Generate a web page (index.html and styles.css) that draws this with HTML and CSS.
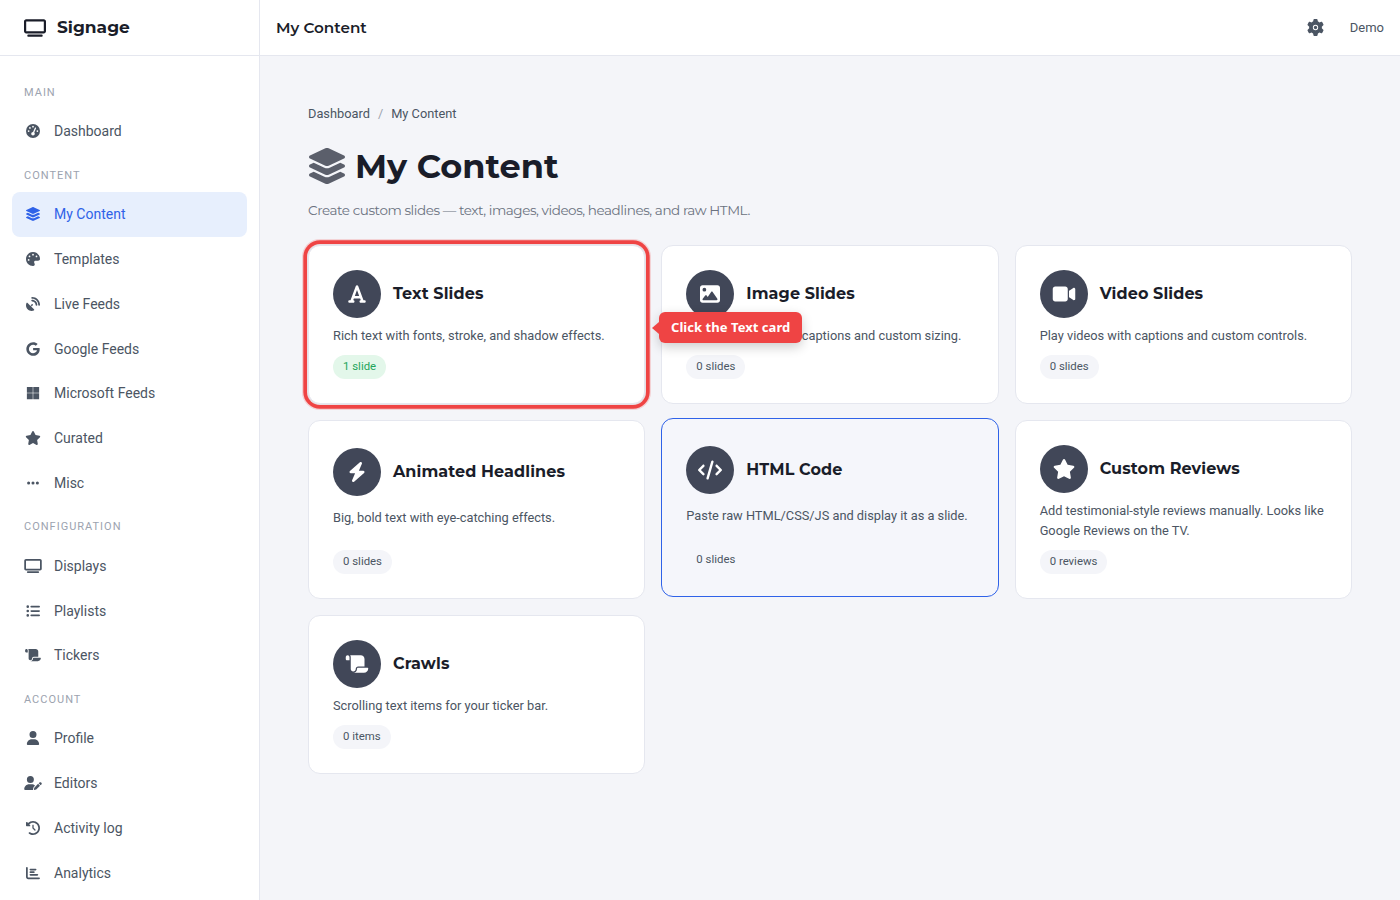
FILE: index.html
```html
<!DOCTYPE html>
<html lang="en">
<head>
<meta charset="utf-8">
<title>My Content</title>
<link rel="stylesheet" href="styles.css">
</head>
<body>
<svg class="sprite" aria-hidden="true">
<symbol id="i-tv" viewBox="0 0 640 512"><path d="M64 64V352H576V64H64zM0 64C0 28.7 28.7 0 64 0H576c35.3 0 64 28.7 64 64V352c0 35.3-28.7 64-64 64H64c-35.3 0-64-28.7-64-64V64zM128 448H512c17.7 0 32 14.3 32 32s-14.3 32-32 32H128c-17.7 0-32-14.3-32-32s14.3-32 32-32z"/></symbol>
<symbol id="i-gauge" viewBox="0 0 512 512"><path d="M0 256a256 256 0 1 1 512 0A256 256 0 1 1 0 256zM288 96a32 32 0 1 0 -64 0 32 32 0 1 0 64 0zM256 416c35.3 0 64-28.7 64-64c0-17.4-6.9-33.1-18.1-44.6L366 161.7c5.3-12.1-.2-26.3-12.3-31.6s-26.3 .2-31.6 12.3L257.9 288c-.6 0-1.3 0-1.9 0c-35.3 0-64 28.7-64 64s28.7 64 64 64zM176 144a32 32 0 1 0 -64 0 32 32 0 1 0 64 0zM96 288a32 32 0 1 0 0-64 32 32 0 1 0 0 64zm352-32a32 32 0 1 0 -64 0 32 32 0 1 0 64 0z"/></symbol>
<symbol id="i-layers" viewBox="32 0 512 512"><path d="M264.5 5.2c14.9-6.9 32.1-6.9 47 0l218.6 101c8.5 3.9 13.9 12.4 13.9 21.8s-5.4 17.9-13.9 21.8l-218.6 101c-14.9 6.9-32.1 6.9-47 0L45.9 149.8C37.4 145.8 32 137.3 32 128s5.4-17.9 13.9-21.8L264.5 5.2zM476.9 209.6l53.2 24.6c8.5 3.9 13.9 12.4 13.9 21.8s-5.4 17.9-13.9 21.8l-218.6 101c-14.9 6.9-32.1 6.9-47 0L45.9 277.8C37.4 273.8 32 265.3 32 256s5.4-17.9 13.9-21.8l53.2-24.6 152 70.2c23.4 10.8 50.4 10.8 73.8 0l152-70.2zm-152 198.2l152-70.2 53.2 24.6c8.5 3.9 13.9 12.4 13.9 21.8s-5.4 17.9-13.9 21.8l-218.6 101c-14.9 6.9-32.1 6.9-47 0L45.9 405.8C37.4 401.8 32 393.3 32 384s5.4-17.9 13.9-21.8l53.2-24.6 152 70.2c23.4 10.8 50.4 10.8 73.8 0z"/></symbol>
<symbol id="i-palette" viewBox="0 0 512 512"><path d="M512 256c0 .9 0 1.8 0 2.7c-.4 36.5-33.6 61.3-70.1 61.3H344c-26.5 0-48 21.5-48 48c0 3.4 .4 6.7 1 9.9c2.1 10.2 6.5 20 10.8 29.9c6.1 13.8 12.1 27.5 12.1 42c0 31.8-21.6 60.7-53.4 62c-3.5 .1-7 .2-10.6 .2C114.6 512 0 397.4 0 256S114.6 0 256 0S512 114.6 512 256zM128 288a32 32 0 1 0 -64 0 32 32 0 1 0 64 0zm0-96a32 32 0 1 0 0-64 32 32 0 1 0 0 64zM288 96a32 32 0 1 0 -64 0 32 32 0 1 0 64 0zm96 96a32 32 0 1 0 0-64 32 32 0 1 0 0 64z"/></symbol>
<symbol id="i-dish" viewBox="0 0 512 512"><path d="M192 32c0-17.7 14.3-32 32-32C383.1 0 512 128.9 512 288c0 17.7-14.3 32-32 32s-32-14.3-32-32C448 164.3 347.7 64 224 64c-17.7 0-32-14.3-32-32zM60.6 220.6L164.7 324.7l28.4-28.4c-.7-2.6-1.1-5.4-1.1-8.3c0-17.7 14.3-32 32-32s32 14.3 32 32s-14.3 32-32 32c-2.9 0-5.6-.4-8.3-1.1l-28.4 28.4L291.4 451.4c14.5 14.5 11.8 38.8-7.3 46.3C260.5 506.9 234.9 512 208 512C93.1 512 0 418.9 0 304c0-26.9 5.1-52.5 14.4-76.1c7.5-19 31.8-21.8 46.3-7.3zM224 96c106 0 192 86 192 192c0 17.7-14.3 32-32 32s-32-14.3-32-32c0-70.7-57.3-128-128-128c-17.7 0-32-14.3-32-32s14.3-32 32-32z"/></symbol>
<symbol id="i-google" viewBox="0 0 488 512"><path d="M488 261.8C488 403.3 391.1 504 248 504 110.8 504 0 393.2 0 256S110.8 8 248 8c66.8 0 123 24.5 166.3 64.9l-67.5 64.9C258.5 52.6 94.3 116.6 94.3 256c0 86.5 69.1 156.6 153.7 156.6 98.2 0 135-70.4 140.8-106.9H248v-85.3h236.1c2.3 12.7 3.9 24.9 3.9 41.4z"/></symbol>
<symbol id="i-ms" viewBox="0 0 448 512"><path d="M0 32h214.6v214.6H0V32zm233.4 0H448v214.6H233.4V32zM0 265.4h214.6V480H0V265.4zm233.4 0H448V480H233.4V265.4z"/></symbol>
<symbol id="i-star" viewBox="0 0 576 512"><path d="M316.9 18C311.6 7 300.4 0 288.1 0s-23.4 7-28.8 18L195 150.3 51.4 171.5c-12 1.8-22 10.2-25.7 21.7s-.7 24.2 7.9 32.7L137.8 329 113.2 474.7c-2 12 3 24.2 12.9 31.3s23 8 33.8 2.3l128.3-68.5 128.3 68.5c10.8 5.7 23.9 4.9 33.8-2.3s14.9-19.3 12.9-31.3L438.5 329 542.7 225.9c8.6-8.5 11.7-21.2 7.9-32.7s-13.7-19.9-25.7-21.7L381.2 150.3 316.9 18z"/></symbol>
<symbol id="i-dots" viewBox="0 0 448 512"><path d="M8 256a56 56 0 1 1 112 0A56 56 0 1 1 8 256zm160 0a56 56 0 1 1 112 0A56 56 0 1 1 168 256zm216-56a56 56 0 1 1 0 112 56 56 0 1 1 0-112z"/></symbol>
<symbol id="i-list" viewBox="0 0 512 512"><path d="M64 144a48 48 0 1 0 0-96 48 48 0 1 0 0 96zM192 64c-17.7 0-32 14.3-32 32s14.3 32 32 32H480c17.7 0 32-14.3 32-32s-14.3-32-32-32H192zm0 160c-17.7 0-32 14.3-32 32s14.3 32 32 32H480c17.7 0 32-14.3 32-32s-14.3-32-32-32H192zm0 160c-17.7 0-32 14.3-32 32s14.3 32 32 32H480c17.7 0 32-14.3 32-32s-14.3-32-32-32H192zM64 464a48 48 0 1 0 0-96 48 48 0 1 0 0 96zm48-208a48 48 0 1 0 -96 0 48 48 0 1 0 96 0z"/></symbol>
<symbol id="i-scroll" viewBox="0 0 576 512"><path d="M0 80v48c0 17.7 14.3 32 32 32H48 96V80c0-26.5-21.5-48-48-48S0 53.5 0 80zM112 32c10 13.4 16 30 16 48V384c0 35.3 28.7 64 64 64s64-28.7 64-64v-5.3c0-32.4 26.3-58.7 58.7-58.7H480V128c0-53-43-96-96-96H112zM464 480c61.9 0 112-50.1 112-112c0-8.8-7.2-16-16-16H314.7c-14.7 0-26.7 11.9-26.7 26.7V384c0 53-43 96-96 96H368h96z"/></symbol>
<symbol id="i-user" viewBox="0 0 448 512"><path d="M224 256A128 128 0 1 0 224 0a128 128 0 1 0 0 256zm-45.7 48C79.8 304 0 383.8 0 482.3C0 498.7 13.3 512 29.7 512H418.3c16.4 0 29.7-13.3 29.7-29.7C448 383.8 368.2 304 269.7 304H178.3z"/></symbol>
<symbol id="i-userpen" viewBox="0 0 640 512"><path d="M224 256A128 128 0 1 0 224 0a128 128 0 1 0 0 256zm-45.7 48C79.8 304 0 383.8 0 482.3C0 498.7 13.3 512 29.7 512H322.8c-3.1-8.8-3.7-18.4-1.4-27.8l15-60.1c2.8-11.3 8.6-21.5 16.8-29.7l40.3-40.3c-32.1-31-75.7-50.1-123.9-50.1H178.3zm435.5-68.3c-15.6-15.6-40.9-15.6-56.6 0l-29.4 29.4 71 71 29.4-29.4c15.6-15.6 15.6-40.9 0-56.6l-14.4-14.4zM375.9 417c-4.1 4.1-7 9.2-8.4 14.9l-15 60.1c-1.4 5.5 .2 11.2 4.2 15.2s9.7 5.6 15.2 4.2l60.1-15c5.6-1.4 10.8-4.3 14.9-8.4L576.1 358.7l-71-71L375.9 417z"/></symbol>
<symbol id="i-history" viewBox="0 0 512 512"><path d="M75 75L41 41C25.9 25.9 0 36.6 0 57.9V168c0 13.3 10.7 24 24 24H134.1c21.4 0 32.1-25.9 17-41l-30.8-30.8C155 85.5 203 64 256 64c106 0 192 86 192 192s-86 192-192 192c-40.8 0-78.6-12.7-109.7-34.4c-14.5-10.1-34.4-6.6-44.6 7.9s-6.6 34.4 7.9 44.6C151.2 495 201.7 512 256 512c141.4 0 256-114.6 256-256S397.4 0 256 0C185.3 0 121.3 28.7 75 75zm181 53c-13.3 0-24 10.7-24 24V256c0 6.4 2.5 12.5 7 17l72 72c9.4 9.4 24.6 9.4 33.9 0s9.4-24.6 0-33.9l-65-65V152c0-13.3-10.7-24-24-24z"/></symbol>
<symbol id="i-chart" viewBox="0 0 512 512"><path d="M32 32c17.7 0 32 14.3 32 32V400c0 8.8 7.2 16 16 16H480c17.7 0 32 14.3 32 32s-14.3 32-32 32H80c-44.2 0-80-35.8-80-80V64C0 46.3 14.3 32 32 32zm96 96c0-17.7 14.3-32 32-32l192 0c17.7 0 32 14.3 32 32s-14.3 32-32 32l-192 0c-17.7 0-32-14.3-32-32zm32 64H288c17.7 0 32 14.3 32 32s-14.3 32-32 32H160c-17.7 0-32-14.3-32-32s14.3-32 32-32zm0 96H416c17.7 0 32 14.3 32 32s-14.3 32-32 32H160c-17.7 0-32-14.3-32-32s14.3-32 32-32z"/></symbol>
<symbol id="i-gear" viewBox="0 0 512 512"><path d="M495.9 166.6c3.2 8.7 .5 18.4-6.4 24.6l-43.3 39.4c1.1 8.3 1.7 16.8 1.7 25.4s-.6 17.1-1.7 25.4l43.3 39.4c6.9 6.2 9.6 15.9 6.4 24.6c-4.4 11.9-9.7 23.3-15.8 34.3l-4.7 8.1c-6.6 11-14 21.4-22.1 31.2c-5.9 7.2-15.7 9.6-24.5 6.8l-55.7-17.7c-13.4 10.3-28.2 18.9-44 25.4l-12.5 57.1c-2 9.1-9 16.3-18.2 17.8c-13.8 2.3-28 3.5-42.5 3.5s-28.7-1.2-42.5-3.5c-9.2-1.5-16.2-8.7-18.2-17.8l-12.5-57.1c-15.8-6.5-30.6-15.1-44-25.4L83.1 425.9c-8.8 2.8-18.6 .3-24.5-6.8c-8.1-9.8-15.5-20.2-22.1-31.2l-4.7-8.1c-6.1-11-11.4-22.4-15.8-34.3c-3.2-8.7-.5-18.4 6.4-24.6l43.3-39.4C64.6 273.1 64 264.6 64 256s.6-17.1 1.7-25.4L22.4 191.2c-6.9-6.2-9.6-15.9-6.4-24.6c4.4-11.9 9.7-23.3 15.8-34.3l4.7-8.1c6.6-11 14-21.4 22.1-31.2c5.9-7.2 15.7-9.6 24.5-6.8l55.7 17.7c13.4-10.3 28.2-18.9 44-25.4l12.5-57.1c2-9.1 9-16.3 18.2-17.8C227.3 1.2 241.5 0 256 0s28.7 1.2 42.5 3.5c9.2 1.5 16.2 8.7 18.2 17.8l12.5 57.1c15.8 6.5 30.6 15.1 44 25.4l55.7-17.7c8.8-2.8 18.6-.3 24.5 6.8c8.1 9.8 15.5 20.2 22.1 31.2l4.7 8.1c6.1 11 11.4 22.4 15.8 34.3zM256 336a80 80 0 1 0 0-160 80 80 0 1 0 0 160z"/><circle cx="256" cy="256" r="50"/></symbol>
<symbol id="i-font" viewBox="0 0 448 512"><path d="M254 52.8C249.3 40.3 237.3 32 224 32s-25.3 8.3-30 20.8L57.8 416H32c-17.7 0-32 14.3-32 32s14.3 32 32 32h96c17.7 0 32-14.3 32-32s-14.3-32-32-32h-1.8l18-48H303.8l18 48H320c-17.7 0-32 14.3-32 32s14.3 32 32 32h96c17.7 0 32-14.3 32-32s-14.3-32-32-32H390.2L254 52.8zM279.8 304H168.2L224 155.1 279.8 304z"/></symbol>
<symbol id="i-image" viewBox="0 0 512 512"><path d="M0 96C0 60.7 28.7 32 64 32H448c35.3 0 64 28.7 64 64V416c0 35.3-28.7 64-64 64H64c-35.3 0-64-28.7-64-64V96zM323.8 202.5c-4.5-6.6-11.9-10.5-19.8-10.5s-15.4 3.9-19.8 10.5l-87 127.6L170.7 297c-4.6-5.7-11.5-9-18.7-9s-14.2 3.3-18.7 9l-64 80c-5.8 7.2-6.9 17.1-2.9 25.4s12.4 13.6 21.6 13.6h96 32H424c8.9 0 17.1-4.9 21.2-12.8s3.6-17.4-1.4-24.7l-120-176zM112 192a48 48 0 1 0 0-96 48 48 0 1 0 0 96z"/></symbol>
<symbol id="i-video" viewBox="0 0 576 512"><path d="M0 128C0 92.7 28.7 64 64 64H320c35.3 0 64 28.7 64 64V384c0 35.3-28.7 64-64 64H64c-35.3 0-64-28.7-64-64V128zM559.1 99.8c10.4 5.6 16.9 16.4 16.9 28.2V384c0 11.8-6.5 22.6-16.9 28.2s-23 5-32.9-1.6l-96-64L416 337.1V320 192 174.9l14.2-9.5 96-64c9.8-6.5 22.4-7.2 32.9-1.6z"/></symbol>
<symbol id="i-bolt" viewBox="0 0 448 512"><path d="M349.4 44.6c5.9-13.7 1.5-29.7-10.6-38.5s-28.6-8-39.9 1.8l-256 224c-10 8.8-13.6 22.9-8.9 35.3S50.7 288 64 288H175.5L98.6 467.4c-5.9 13.7-1.5 29.7 10.6 38.5s28.6 8 39.9-1.8l256-224c10-8.8 13.6-22.9 8.9-35.3s-16.6-20.7-30-20.7H272.5L349.4 44.6z"/></symbol>
<symbol id="i-code" viewBox="0 0 640 512"><path d="M392.8 1.2c-17-4.9-34.7 5-39.6 22l-128 448c-4.9 17 5 34.7 22 39.6s34.7-5 39.6-22l128-448c4.9-17-5-34.7-22-39.6zm80.6 120.1c-12.5 12.5-12.5 32.8 0 45.3L562.7 256l-89.4 89.4c-12.5 12.5-12.5 32.8 0 45.3s32.8 12.5 45.3 0l112-112c12.5-12.5 12.5-32.8 0-45.3l-112-112c-12.5-12.5-32.8-12.5-45.3 0zm-306.7 0c-12.5-12.5-32.8-12.5-45.3 0l-112 112c-12.5 12.5-12.5 32.8 0 45.3l112 112c12.5 12.5 32.8 12.5 45.3 0s12.5-32.8 0-45.3L77.3 256l89.4-89.4c12.5-12.5 12.5-32.8 0-45.3z"/></symbol>
</svg>

<div class="app">
  <aside class="sidebar">
    <div class="brand"><svg class="brand-icon"><use href="#i-tv"/></svg><span class="brand-name">Signage</span></div>
    <nav class="nav">
      <div class="nav-label">MAIN</div>
      <a class="nav-item"><span class="nav-icon"><svg><use href="#i-gauge"/></svg></span>Dashboard</a>
      <div class="nav-label">CONTENT</div>
      <a class="nav-item active"><span class="nav-icon"><svg><use href="#i-layers"/></svg></span>My Content</a>
      <a class="nav-item"><span class="nav-icon"><svg><use href="#i-palette"/></svg></span>Templates</a>
      <a class="nav-item"><span class="nav-icon"><svg><use href="#i-dish"/></svg></span>Live Feeds</a>
      <a class="nav-item"><span class="nav-icon"><svg><use href="#i-google"/></svg></span>Google Feeds</a>
      <a class="nav-item"><span class="nav-icon"><svg><use href="#i-ms"/></svg></span>Microsoft Feeds</a>
      <a class="nav-item"><span class="nav-icon"><svg><use href="#i-star"/></svg></span>Curated</a>
      <a class="nav-item"><span class="nav-icon"><svg><use href="#i-dots"/></svg></span>Misc</a>
      <div class="nav-label">CONFIGURATION</div>
      <a class="nav-item"><span class="nav-icon"><svg><use href="#i-tv"/></svg></span>Displays</a>
      <a class="nav-item"><span class="nav-icon"><svg><use href="#i-list"/></svg></span>Playlists</a>
      <a class="nav-item"><span class="nav-icon"><svg><use href="#i-scroll"/></svg></span>Tickers</a>
      <div class="nav-label">ACCOUNT</div>
      <a class="nav-item"><span class="nav-icon"><svg><use href="#i-user"/></svg></span>Profile</a>
      <a class="nav-item"><span class="nav-icon"><svg><use href="#i-userpen"/></svg></span>Editors</a>
      <a class="nav-item"><span class="nav-icon"><svg><use href="#i-history"/></svg></span>Activity log</a>
      <a class="nav-item"><span class="nav-icon"><svg><use href="#i-chart"/></svg></span>Analytics</a>
    </nav>
  </aside>
  <div class="body">
    <header class="topbar">
      <div class="topbar-title">My Content</div>
      <div class="topbar-right"><svg class="gear"><use href="#i-gear"/></svg><span class="user">Demo</span></div>
    </header>
    <main class="main">
      <div class="crumbs"><span>Dashboard</span><span class="sep">/</span><span>My Content</span></div>
      <h1 class="title"><svg class="title-icon"><use href="#i-layers"/></svg>My Content</h1>
      <p class="sub">Create custom slides — text, images, videos, headlines, and raw HTML.</p>
      <div class="grid">
        <section class="card highlighted">
          <div class="card-head"><span class="circle"><svg><use href="#i-font"/></svg></span><h2>Text Slides</h2></div>
          <p class="desc">Rich text with fonts, stroke, and shadow effects.</p>
          <div class="badge-row"><span class="badge green">1 slide</span></div>
          <div class="tip">Click the Text card</div>
        </section>
        <section class="card">
          <div class="card-head"><span class="circle"><svg><use href="#i-image"/></svg></span><h2>Image Slides</h2></div>
          <p class="desc">Upload images with captions and custom sizing.</p>
          <div class="badge-row"><span class="badge">0 slides</span></div>
        </section>
        <section class="card">
          <div class="card-head"><span class="circle"><svg><use href="#i-video"/></svg></span><h2>Video Slides</h2></div>
          <p class="desc">Play videos with captions and custom controls.</p>
          <div class="badge-row"><span class="badge">0 slides</span></div>
        </section>
        <section class="card">
          <div class="card-head"><span class="circle"><svg><use href="#i-bolt"/></svg></span><h2>Animated Headlines</h2></div>
          <p class="desc">Big, bold text with eye-catching effects.</p>
          <div class="badge-row"><span class="badge">0 slides</span></div>
        </section>
        <section class="card hovered">
          <div class="card-head"><span class="circle"><svg><use href="#i-code"/></svg></span><h2>HTML Code</h2></div>
          <p class="desc">Paste raw HTML/CSS/JS and display it as a slide.</p>
          <div class="badge-row"><span class="badge">0 slides</span></div>
        </section>
        <section class="card">
          <div class="card-head"><span class="circle"><svg><use href="#i-star"/></svg></span><h2>Custom Reviews</h2></div>
          <p class="desc">Add testimonial-style reviews manually. Looks like Google Reviews on the TV.</p>
          <div class="badge-row"><span class="badge">0 reviews</span></div>
        </section>
        <section class="card">
          <div class="card-head"><span class="circle"><svg><use href="#i-scroll"/></svg></span><h2>Crawls</h2></div>
          <p class="desc">Scrolling text items for your ticker bar.</p>
          <div class="badge-row"><span class="badge">0 items</span></div>
        </section>
      </div>
    </main>
  </div>
</div>
</body>
</html>
```

FILE: styles.css
```css
* { box-sizing: border-box; }
html, body { margin: 0; height: 100%; overflow: hidden; }
body { font-family: Roboto, "Liberation Sans", sans-serif; color: #4b5563; background: #f4f5f9; }
.sprite { display: none; }
svg { fill: currentColor; display: block; }

.app { display: flex; height: 900px; }
.sidebar { width: 260px; flex: none; background: #fff; border-right: 1px solid #e5e7ef; }
.brand { height: 56px; display: flex; align-items: center; gap: 11px; padding-left: 24px; border-bottom: 1px solid #e5e7ef; font-family: Montserrat, Inter, sans-serif; font-weight: 700; font-size: 17px; color: #1a1d29; }
.brand-icon { width: 22px; height: 18px; }
.brand-name { margin-bottom: 2px; }
.nav { padding: 14.8px 12px 0; }
.nav-label { padding: 14px 12px 7.6px; font-size: 11px; line-height: 16.5px; letter-spacing: 1px; color: #9ca3af; }
.nav-item { display: flex; align-items: center; gap: 12px; height: 44.8px; padding: 0 12px; border-radius: 8px; font-size: 14px; color: #4b5563; }
.nav-icon { width: 18px; height: 14px; display: flex; justify-content: center; }
.nav-icon svg { height: 14px; width: 18px; }
.nav-item.active { background: #e7effd; color: #2f62e8; }

.body { flex: 1; min-width: 0; display: flex; flex-direction: column; }
.topbar { height: 56px; flex: none; display: flex; align-items: center; justify-content: space-between; padding: 0 16px; background: #fff; border-bottom: 1px solid #e5e7ef; }
.topbar-title { font-family: Montserrat, Inter, sans-serif; font-weight: 600; font-size: 15.2px; color: #1a1d29; }
.topbar-right { display: flex; align-items: center; gap: 26px; }
.gear { width: 17px; height: 17px; color: #4b5563; }
.user { font-size: 13px; color: #4b5563; }

.main { padding: 48px; flex: 1; }
.crumbs { display: flex; gap: 8px; font-size: 12.8px; line-height: 20px; color: #4b5563; }
.sep { color: #9ca3af; }
.title { display: flex; align-items: center; gap: 10px; margin: 20px 0 0; font-family: Montserrat, Inter, sans-serif; font-weight: 700; font-size: 33.6px; line-height: 44px; color: #1a1d29; }
.title-icon { width: 36px; height: 36px; margin-left: 1px; color: #5b5f6b; }
.sub { margin: 12px 0 0; font-family: Montserrat, Inter, sans-serif; font-size: 13.5px; letter-spacing: -.43px; line-height: 20px; color: #6b7280; }

.grid { display: grid; grid-template-columns: repeat(3, 1fr); gap: 16px; margin-top: 25px; }
.card { position: relative; display: grid; padding: 24px; background: #fff; border: 1px solid #e5e7ef; border-radius: 12px; }
.card h2 { margin: 0 0 2px; font-family: Montserrat, Inter, sans-serif; font-weight: 700; font-size: 16px; letter-spacing: .1px; color: #1a1d29; }
.card-head { display: flex; align-items: center; gap: 12px; align-self: center; margin-bottom: 8px; }
.circle { width: 48px; height: 48px; flex: none; border-radius: 50%; background: #414758; color: #fff; display: flex; align-items: center; justify-content: center; }
.circle svg { width: 24px; height: 20px; }
.desc { margin: 0 0 8.5px; font-size: 12.8px; line-height: 20px; color: #4b5563; align-self: start; }
.badge-row { display: flex; align-self: end; }
.badge { padding: 0 10px; height: 24.5px; line-height: 23.5px; border-radius: 999px; font-size: 11.4px; background: #f4f5f9; color: #4b5563; }
.badge.green { background: #e3f7ea; color: #22a55b; }

.highlighted { box-shadow: 0 0 0 1px #e9dfe3, 0 0 0 4.7px #ef4444, 0 0 0 6px rgba(239, 68, 68, .2); z-index: 2; }
.hovered { transform: translateY(-2px); border-color: #2f62e8; background: #f5f6fb; }
.hovered .badge { background: transparent; }

.tip { position: absolute; left: 350px; top: 66px; height: 31px; padding: 0 12px 2px; display: flex; align-items: center; background: #ef4444; color: #fff; border-radius: 6px; font-family: "Noto Sans", sans-serif; font-weight: 700; font-size: 13px; letter-spacing: .05px; white-space: nowrap; box-shadow: 0 4px 12px rgba(0, 0, 0, .2); }
.tip::before { content: ""; position: absolute; left: -7px; top: 50%; margin-top: -6px; border-style: solid; border-width: 6px 7px 6px 0; border-color: transparent #ef4444 transparent transparent; }
```
